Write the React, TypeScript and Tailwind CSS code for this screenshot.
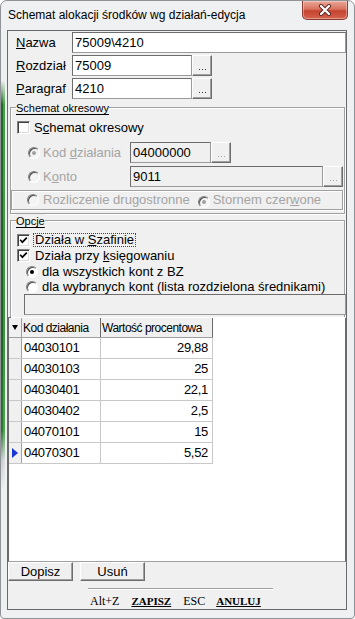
import React from "react";

const SANS = "font-['Liberation_Sans',Arial,sans-serif]";

function Field({ value, disabled, className = "" }: { value?: string; disabled?: boolean; className?: string }) {
  return (
    <div
      className={`h-[21px] border border-[#6d6d6d] border-r-[#9a9a9a] border-b-[#9a9a9a] ${
        disabled ? "bg-[#f0f0f0]" : "bg-white"
      } flex items-center pl-[2px] text-[13px] leading-none text-black ${className}`}
    >
      {value}
    </div>
  );
}

function Dots({ disabled }: { disabled?: boolean }) {
  const c = disabled ? "bg-[#a8a8a8]" : "bg-[#303030]";
  return (
    <div className="w-[20px] h-[21px] shrink-0 bg-[#f0f0f0] border border-t-white border-l-white border-r-[#6d6d6d] border-b-[#6d6d6d] shadow-[inset_-1px_-1px_0_#a0a0a0] flex items-end justify-center pb-[5px] gap-[2px]">
      <span className={`w-[1px] h-[1px] ${c}`} />
      <span className={`w-[1px] h-[1px] ${c}`} />
      <span className={`w-[1px] h-[1px] ${c}`} />
    </div>
  );
}

function Radio({ checked, disabled }: { checked?: boolean; disabled?: boolean }) {
  return (
    <span
      className={`inline-flex shrink-0 w-[12px] h-[12px] rounded-full border border-t-[#808080] border-l-[#808080] border-r-white border-b-white ${
        disabled ? "bg-[#f4f4f4]" : "bg-white"
      } shadow-[inset_1px_1px_0_#505050] items-center justify-center`}
    >
      {checked && <span className={`w-[4px] h-[4px] rounded-full ${disabled ? "bg-[#a0a0a0]" : "bg-black"}`} />}
    </span>
  );
}

function Check({ checked }: { checked?: boolean }) {
  return (
    <span className="inline-flex shrink-0 w-[13px] h-[13px] border border-t-[#808080] border-l-[#808080] border-r-white border-b-white bg-white shadow-[inset_1px_1px_0_#404040,inset_-1px_-1px_0_#dcdcdc] items-center justify-center">
      {checked && (
        <svg width="9" height="9" viewBox="0 0 9 9">
          <path d="M1.2 3.8 L3.4 6.2 L7.8 1.6" stroke="black" strokeWidth="1.7" fill="none" />
        </svg>
      )}
    </span>
  );
}

function Group({ label, className = "", children }: { label?: string; className?: string; children?: React.ReactNode }) {
  return (
    <div className={`relative border border-[#a0a0a0] shadow-[inset_1px_1px_0_white,1px_1px_0_white] ${className}`}>
      {label && (
        <span className="absolute left-[5px] top-[-7px] bg-[#f0f0f0] text-[11px] leading-[14px] underline underline-offset-[2px]">
          {label}
        </span>
      )}
      {children}
    </div>
  );
}

function Btn({ children, w }: { children: React.ReactNode; w: string }) {
  return (
    <div
      className={`${w} h-[19px] bg-[#f0f0f0] border border-t-white border-l-white border-r-[#6d6d6d] border-b-[#6d6d6d] shadow-[inset_-1px_-1px_0_#a0a0a0] flex items-center justify-center text-[13px] leading-none`}
    >
      {children}
    </div>
  );
}

const rows: [string, string][] = [
  ["04030101", "29,88"],
  ["04030103", "25"],
  ["04030401", "22,1"],
  ["04030402", "2,5"],
  ["04070101", "15"],
  ["04070301", "5,52"],
];

export default function App() {
  return (
    <div
      className={`${SANS} w-[355px] h-[619px] flex flex-col bg-[#eff0f2] border border-[#8f9398] rounded-t-[7px] rounded-b-[4px] overflow-hidden relative text-black`}
    >
      {/* Title bar */}
      <div className="h-[29px] shrink-0 flex items-center pl-[7px] pb-[2px] text-[12px]">
        Schemat alokacji środków wg działań-edycja
      </div>
      <div className="absolute right-[6px] top-0 w-[46px] h-[19px] rounded-b-[5px] border border-t-0 border-[#8a3b33] bg-[linear-gradient(to_bottom,#e9a898_0%,#d9725f_45%,#c5432f_55%,#d5644e_100%)] flex items-center justify-center shadow-[inset_0_0_0_1px_rgba(255,255,255,0.35)]">
        <svg width="14" height="12" viewBox="0 0 14 12">
          <path d="M3 2 L11 10 M11 2 L3 10" stroke="#5a2a24" strokeWidth="4" strokeLinecap="round" />
          <path d="M3 2 L11 10 M11 2 L3 10" stroke="white" strokeWidth="2.2" strokeLinecap="round" />
        </svg>
      </div>

      <div className="flex flex-1 min-h-0">
        {/* left frame */}
        <div className="w-[6px] shrink-0 flex">
          <div className="w-[2px] bg-[linear-gradient(to_bottom,#eff0f2_0px,#eff0f2_50px,#1f6a24_75px,#1d6522_300px,#2a7a2e_400px,#c9cccf_430px,#eff0f2_460px)]" />
          <div className="w-[2px] bg-[linear-gradient(to_bottom,#eff0f2_0px,#eff0f2_50px,#45a148_75px,#3b9440_300px,#4aa34e_400px,#d7d9db_430px,#eff0f2_460px)]" />
          <div className="flex-1" />
        </div>

        {/* client */}
        <div className="w-[340px] h-[580px] shrink-0 border border-[#6a6a6a] bg-[#f0f0f0] flex flex-col">
          {/* Nazwa */}
          <div className="mt-[1px] h-[21px] flex items-center">
            <div className="w-[64px] pl-[8px] text-[13px]">
              <span className="underline">N</span>azwa
            </div>
            <Field value="75009\4210" className="flex-1" />
          </div>
          {/* Rozdział */}
          <div className="mt-[2px] h-[21px] flex items-center">
            <div className="w-[64px] pl-[8px] text-[13px]">
              <span className="underline">R</span>ozdział
            </div>
            <Field value="75009" className="w-[120px]" />
            <Dots />
          </div>
          {/* Paragraf */}
          <div className="mt-[2px] h-[21px] flex items-center">
            <div className="w-[64px] pl-[8px] text-[13px]">
              <span className="underline">P</span>aragraf
            </div>
            <Field value="4210" className="w-[120px]" />
            <Dots />
          </div>

          {/* Schemat okresowy group */}
          <Group label="Schemat okresowy" className="mt-[8px] ml-[2px] mr-[1px] h-[107px]">
            <div className="mt-[13px] h-[13px] flex items-center pl-[6px] text-[13px]">
              <Check />
              <span className="ml-[4px]">
                S<span className="underline">c</span>hemat okresowy
              </span>
            </div>
            <div className="mt-[8px] h-[21px] flex items-center text-[13px] text-[#a4a4a4]">
              <div className="w-[119px] flex items-center pl-[17px]">
                <Radio checked disabled />
                <span className="ml-[3px]">
                  Kod <span className="underline">d</span>ziałania
                </span>
              </div>
              <Field value="04000000" disabled className="w-[81px]" />
              <Dots disabled />
            </div>
            <div className="mt-[3px] h-[21px] flex items-center text-[13px] text-[#a4a4a4]">
              <div className="w-[119px] flex items-center pl-[17px]">
                <Radio disabled />
                <span className="ml-[3px]">
                  K<span className="underline">o</span>nto
                </span>
              </div>
              <Field value="9011" disabled className="w-[193px]" />
              <Dots disabled />
            </div>
            <Group className="mt-[3px] mr-[1px] h-[20px]">
              <div className="h-full flex items-center pl-[15px] text-[13px] text-[#a4a4a4]">
                <Radio disabled />
                <span className="ml-[4px]">
                  Rozliczenie dru<span className="underline">g</span>ostronne
                </span>
                <span className="ml-[8px]">
                  <Radio checked disabled />
                </span>
                <span className="ml-[3px]">
                  Stornem czer<span className="underline">w</span>one
                </span>
              </div>
            </Group>
          </Group>

          {/* Opcje group */}
          <Group label="Opcje" className="mt-[6px] ml-[2px] mr-[1px] border-b-0 pb-[2px]">
            <div className="mt-[12px] h-[14px] flex items-center pl-[6px] text-[13px]">
              <Check checked />
              <span className="ml-[3px] border border-dotted border-[#444] px-[1px] leading-[12px]">
                Działa w <span className="underline">S</span>zafinie
              </span>
            </div>
            <div className="mt-[2px] h-[13px] flex items-center pl-[6px] text-[13px]">
              <Check checked />
              <span className="ml-[5px]">
                Działa przy <span className="underline">k</span>sięgowaniu
              </span>
            </div>
            <div className="mt-[3px] h-[13px] flex items-center pl-[15px] text-[13px]">
              <Radio checked />
              <span className="ml-[4px]">dla wszystkich kont z BZ</span>
            </div>
            <div className="mt-[2px] h-[13px] flex items-center pl-[15px] text-[13px]">
              <Radio />
              <span className="ml-[4px]">dla wybranych kont (lista rozdzielona średnikami)</span>
            </div>
            <div className="mt-[1px] pl-[13px] mr-[-2px]">
              <Field disabled />
            </div>
          </Group>

          {/* Grid */}
          <div className="h-[245px] shrink-0 border-t border-l border-r border-[#6a6a6a] border-b border-b-[#a0a0a0] bg-white">
            <div className="w-[204px] h-[20px] flex bg-[#f0f0f0] border-b border-[#a0a0a0] text-[12px] tracking-[-0.5px]">
              <div className="w-[13px] border-r border-[#a0a0a0] flex items-center justify-center">
                <svg width="6" height="5" viewBox="0 0 6 5">
                  <path d="M0 0 H6 L3 5 Z" fill="black" />
                </svg>
              </div>
              <div className="w-[79px] border-r border-[#6a6a6a] flex items-center pl-[1px]">Kod działania</div>
              <div className="w-[112px] border-r border-[#6a6a6a] flex items-center pl-[1px]">Wartość procentowa</div>
            </div>
            {rows.map(([k, v], i) => (
              <div key={k} className="w-[204px] h-[21px] flex border-b border-[#c8c8c8] text-[13px] tracking-[-0.3px]">
                <div className="w-[13px] bg-[#f0f0f0] border-r border-[#a0a0a0] flex items-center justify-center">
                  {i === rows.length - 1 && (
                    <svg width="6" height="10" viewBox="0 0 6 10">
                      <path d="M0 0 L6 5 L0 10 Z" fill="#1a35d8" />
                    </svg>
                  )}
                </div>
                <div className="w-[79px] border-r border-[#c8c8c8] flex items-center pl-[2px]">{k}</div>
                <div className="w-[112px] border-r border-[#c8c8c8] flex items-center justify-end pr-[4px]">{v}</div>
              </div>
            ))}
          </div>

          {/* Buttons */}
          <div className="flex gap-[7px]">
            <Btn w="w-[65px]">Dopisz</Btn>
            <Btn w="w-[65px]">Usuń</Btn>
          </div>
          <div className="mt-[7px] ml-[80px] w-[185px] h-[2px] border-t border-[#a0a0a0] border-b border-b-white" />
          <div className="mt-[4px] ml-[82px] flex items-center font-['Liberation_Serif','Times_New_Roman',serif] leading-[14px]">
            <span className="text-[12px]">Alt+Z</span>
            <span className="ml-[12px] text-[11px] font-bold underline">ZAPISZ</span>
            <span className="ml-[12px] text-[12px]">ESC</span>
            <span className="ml-[11px] text-[11px] font-bold underline">ANULUJ</span>
          </div>
        </div>

        {/* right frame */}
        <div className="flex-1" />
      </div>
      <div className="h-[8px] shrink-0" />
    </div>
  );
}
